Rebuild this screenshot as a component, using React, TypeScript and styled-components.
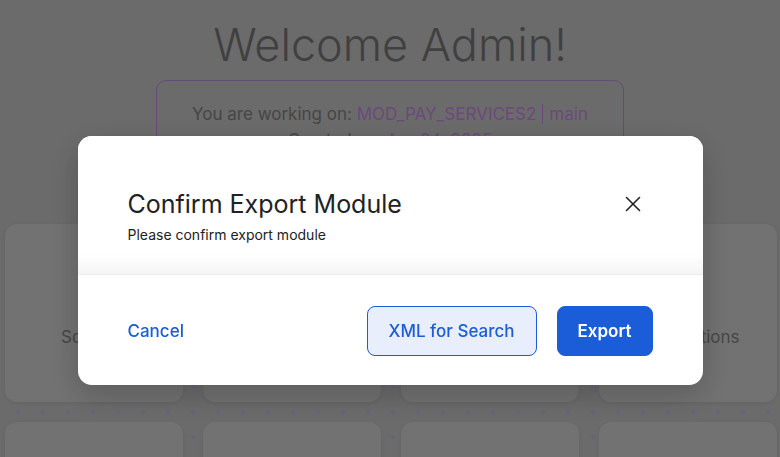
import styled, { createGlobalStyle } from "styled-components";
import { X, Database, Search, FileText, Layers, Settings, Users, Boxes, ArrowLeftRight } from "lucide-react";

const GlobalStyle = createGlobalStyle`
    html, body {
        margin: 0;
        padding: 0;
        height: 100%;
        overflow: hidden;
    }
    body {
        font-family: Inter, "Noto Sans", sans-serif;
        background-color: #c3c3c3;
    }
`;

const Page = styled.div`
    height: 100vh;
    overflow: hidden;
    display: flex;
    flex-direction: column;
    align-items: center;
    padding-top: 18px;
    box-sizing: border-box;
`;

const Title = styled.h1`
    margin: 0;
    font-size: 45px;
    font-weight: 300;
    line-height: 54px;
    color: #767676;
`;

const InfoBox = styled.div`
    margin-top: 8px;
    width: 468px;
    box-sizing: border-box;
    border: 1px solid #b98ad0;
    border-radius: 10px;
    padding: 20px 0 14px;
    text-align: center;
    font-size: 17px;
    line-height: 26px;
    color: #808080;
`;

const Accent = styled.span`
    color: #c486e2;
`;

const Divider = styled.span`
    display: inline-block;
    width: 1px;
    height: 20px;
    margin: 0 6px -4px;
    background: #c486e2;
`;

// dotted track behind the cards
const Grid = styled.div`
    align-self: stretch;
    display: grid;
    grid-template-columns: repeat(4, 178px);
    grid-auto-rows: 178px;
    gap: 20px;
    padding: 0 0 0 5px;
    margin-top: 56px;
    background-image: radial-gradient(circle, #c4b4d6 2px, transparent 2.6px);
    background-size: 25px 25px;
    background-position: 5.5px 0.5px;
`;

const Card = styled.div`
    background: #cfcfcf;
    border-radius: 12px;
    box-shadow: 0 1px 4px rgba(0, 0, 0, 0.08);
    display: flex;
    flex-direction: column;
    align-items: center;
    padding-top: 46px;
    box-sizing: border-box;
    color: #333;
`;

const CardLabel = styled.div`
    margin-top: 19px;
    font-size: 17px;
    line-height: 20px;
    color: #808080;
`;

const Overlay = styled.div`
    position: fixed;
    inset: 0;
    background: rgba(0, 0, 0, 0.45);
    display: flex;
    justify-content: center;
    padding-top: 136px;
    box-sizing: border-box;
`;

const Modal = styled.div`
    width: 625px;
    height: 249px;
    background: #fff;
    border-radius: 14px;
    overflow: hidden;
    display: flex;
    flex-direction: column;
    box-shadow: 0 10px 30px rgba(0, 0, 0, 0.2);
`;

const ModalBody = styled.div`
    height: 139px;
    box-sizing: border-box;
    padding: 52px 50px 0;
    position: relative;
    border-bottom: 1px solid #ececec;
    background: linear-gradient(to bottom, #fff 0, #fff 118px, #f4f4f4 139px);
`;

const ModalTitle = styled.h2`
    margin: 0;
    font-size: 25px;
    font-weight: 400;
    line-height: 32px;
    color: #222;
`;

const ModalSubtitle = styled.p`
    margin: 5px 0 0;
    font-size: 14px;
    line-height: 20px;
    color: #222;
`;

const CloseButton = styled.button`
    position: absolute;
    top: 55px;
    right: 57px;
    width: 26px;
    height: 26px;
    padding: 0;
    border: none;
    background: none;
    color: #222;
    display: flex;
    align-items: center;
    justify-content: center;
    cursor: pointer;
`;

const ModalFooter = styled.div`
    flex: 1;
    display: flex;
    align-items: center;
    padding: 1px 50px 0;
    gap: 20px;
`;

const LinkButton = styled.button`
    margin-right: auto;
    border: none;
    background: none;
    padding: 0;
    font-family: inherit;
    font-size: 17px;
    font-weight: 500;
    color: #1b5cd9;
    cursor: pointer;
`;

const ActionButton = styled.button<{ $primary?: boolean }>`
    height: 50px;
    padding: 0 ${(p) => (p.$primary ? "20px" : "21px")};
    border-radius: 8px;
    font-family: inherit;
    font-size: 17px;
    font-weight: ${(p) => (p.$primary ? 600 : 500)};
    border: 1px solid #1b5cd9;
    background: ${(p) => (p.$primary ? "#1b5cd9" : "#e8eefb")};
    color: ${(p) => (p.$primary ? "#fff" : "#1b5cd9")};
    cursor: pointer;
`;

const cards = [
    { icon: Database, label: "Sources" },
    { icon: Search, label: "Search" },
    { icon: FileText, label: "Reports" },
    { icon: ArrowLeftRight, label: "Transactions" },
    { icon: Layers, label: "Modules" },
    { icon: Settings, label: "Settings" },
    { icon: Users, label: "Users" },
    { icon: Boxes, label: "Packages" },
];

export default function App() {
    return (
        <>
            <GlobalStyle />
            <Page>
                <Title>Welcome Admin!</Title>
                <InfoBox>
                    <div>
                        You are working on: <Accent>MOD_PAY_SERVICES2</Accent>
                        <Divider />
                        <Accent>main</Accent>
                    </div>
                    <div>
                        Created on: <Accent>Apr 04, 2025</Accent>
                    </div>
                </InfoBox>
                <Grid>
                    {cards.map((c) => (
                        <Card key={c.label}>
                            <c.icon size={38} strokeWidth={2.2} />
                            <CardLabel>{c.label}</CardLabel>
                        </Card>
                    ))}
                </Grid>
            </Page>
            <Overlay>
                <Modal>
                    <ModalBody>
                        <ModalTitle>Confirm Export Module</ModalTitle>
                        <ModalSubtitle>Please confirm export module</ModalSubtitle>
                        <CloseButton aria-label="Close">
                            <X size={26} strokeWidth={1.5} />
                        </CloseButton>
                    </ModalBody>
                    <ModalFooter>
                        <LinkButton>Cancel</LinkButton>
                        <ActionButton>XML for Search</ActionButton>
                        <ActionButton $primary>Export</ActionButton>
                    </ModalFooter>
                </Modal>
            </Overlay>
        </>
    );
}
